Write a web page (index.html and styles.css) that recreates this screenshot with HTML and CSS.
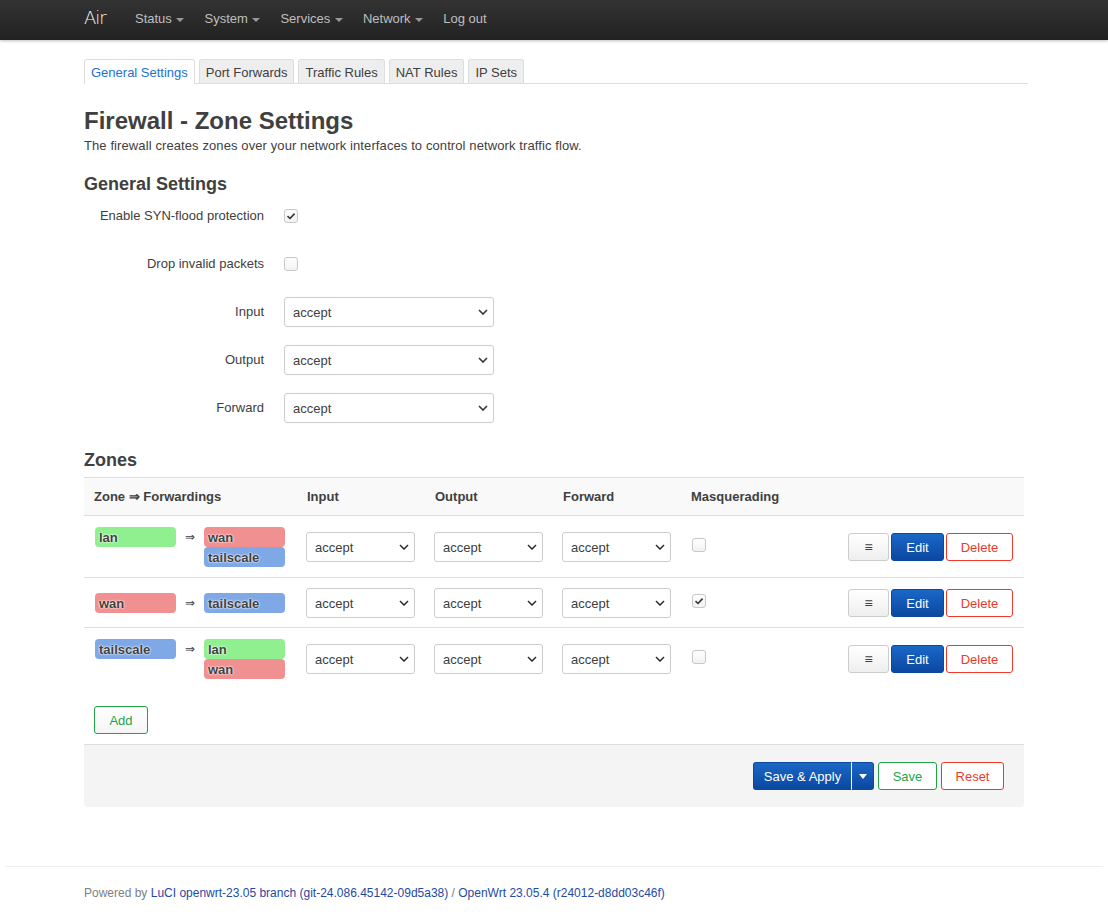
FILE: index.html
```html
<!DOCTYPE html>
<html lang="en">
<head>
    <meta charset="UTF-8">
    <title>Air - Firewall - LuCI</title>
    <link rel="stylesheet" href="styles.css">
</head>
<body>
    <header class="topbar">
        <div class="container topbar-inner">
            <a class="brand" href="#">Air</a>
            <ul class="nav">
                <li>Status <span class="caret"></span></li>
                <li>System <span class="caret"></span></li>
                <li>Services <span class="caret"></span></li>
                <li>Network <span class="caret"></span></li>
                <li>Log out</li>
            </ul>
        </div>
    </header>

    <main class="container">
        <ul class="tabs">
            <li class="active">General Settings</li>
            <li>Port Forwards</li>
            <li>Traffic Rules</li>
            <li>NAT Rules</li>
            <li>IP Sets</li>
        </ul>

        <h2 class="page-title">Firewall - Zone Settings</h2>
        <p class="page-desc">The firewall creates zones over your network interfaces to control network traffic flow.</p>

        <h3>General Settings</h3>
        <div class="form-row">
            <label>Enable SYN-flood protection</label>
            <span class="check checked">
                <svg viewBox="0 0 14 14" width="14" height="14"><path d="M3.5 7.2 L6 9.5 L10.6 4.6" fill="none" stroke="#333" stroke-width="1.6"/></svg>
            </span>
        </div>
        <div class="form-row">
            <label>Drop invalid packets</label>
            <span class="check"></span>
        </div>
        <div class="form-row">
            <label>Input</label>
            <span class="select wide"><select><option>accept</option></select><svg viewBox="0 0 10 6" width="10" height="6"><path d="M1 1 L5 5 L9 1" fill="none" stroke="#333" stroke-width="1.6"/></svg></span>
        </div>
        <div class="form-row">
            <label>Output</label>
            <span class="select wide"><select><option>accept</option></select><svg viewBox="0 0 10 6" width="10" height="6"><path d="M1 1 L5 5 L9 1" fill="none" stroke="#333" stroke-width="1.6"/></svg></span>
        </div>
        <div class="form-row">
            <label>Forward</label>
            <span class="select wide"><select><option>accept</option></select><svg viewBox="0 0 10 6" width="10" height="6"><path d="M1 1 L5 5 L9 1" fill="none" stroke="#333" stroke-width="1.6"/></svg></span>
        </div>

        <h3 class="zones-title">Zones</h3>
        <table class="zones">
            <colgroup>
                <col style="width: 213px">
                <col style="width: 128px">
                <col style="width: 128px">
                <col style="width: 128px">
                <col style="width: 120px">
                <col>
            </colgroup>
            <thead>
                <tr>
                    <th>Zone &rArr; Forwardings</th>
                    <th>Input</th>
                    <th>Output</th>
                    <th>Forward</th>
                    <th>Masquerading</th>
                    <th></th>
                </tr>
            </thead>
            <tbody>
                <tr>
                    <td>
                        <div class="fwd">
                            <span class="zone lan">lan</span>
                            <span class="arrow">&rArr;</span>
                            <span class="stack"><span class="zone wan">wan</span><span class="zone ts">tailscale</span></span>
                        </div>
                    </td>
                    <td><span class="select"><select><option>accept</option></select><svg viewBox="0 0 10 6" width="10" height="6"><path d="M1 1 L5 5 L9 1" fill="none" stroke="#333" stroke-width="1.6"/></svg></span></td>
                    <td><span class="select"><select><option>accept</option></select><svg viewBox="0 0 10 6" width="10" height="6"><path d="M1 1 L5 5 L9 1" fill="none" stroke="#333" stroke-width="1.6"/></svg></span></td>
                    <td><span class="select"><select><option>accept</option></select><svg viewBox="0 0 10 6" width="10" height="6"><path d="M1 1 L5 5 L9 1" fill="none" stroke="#333" stroke-width="1.6"/></svg></span></td>
                    <td><span class="check masq"></span></td>
                    <td class="actions">
                        <button class="btn">&equiv;</button><button class="btn btn-edit">Edit</button><button class="btn btn-del">Delete</button>
                    </td>
                </tr>
                <tr class="single">
                    <td>
                        <div class="fwd">
                            <span class="zone wan">wan</span>
                            <span class="arrow">&rArr;</span>
                            <span class="stack"><span class="zone ts">tailscale</span></span>
                        </div>
                    </td>
                    <td><span class="select"><select><option>accept</option></select><svg viewBox="0 0 10 6" width="10" height="6"><path d="M1 1 L5 5 L9 1" fill="none" stroke="#333" stroke-width="1.6"/></svg></span></td>
                    <td><span class="select"><select><option>accept</option></select><svg viewBox="0 0 10 6" width="10" height="6"><path d="M1 1 L5 5 L9 1" fill="none" stroke="#333" stroke-width="1.6"/></svg></span></td>
                    <td><span class="select"><select><option>accept</option></select><svg viewBox="0 0 10 6" width="10" height="6"><path d="M1 1 L5 5 L9 1" fill="none" stroke="#333" stroke-width="1.6"/></svg></span></td>
                    <td><span class="check masq checked"><svg viewBox="0 0 14 14" width="14" height="14"><path d="M3.5 7.2 L6 9.5 L10.6 4.6" fill="none" stroke="#333" stroke-width="1.6"/></svg></span></td>
                    <td class="actions">
                        <button class="btn">&equiv;</button><button class="btn btn-edit">Edit</button><button class="btn btn-del">Delete</button>
                    </td>
                </tr>
                <tr>
                    <td>
                        <div class="fwd">
                            <span class="zone ts">tailscale</span>
                            <span class="arrow">&rArr;</span>
                            <span class="stack"><span class="zone lan">lan</span><span class="zone wan">wan</span></span>
                        </div>
                    </td>
                    <td><span class="select"><select><option>accept</option></select><svg viewBox="0 0 10 6" width="10" height="6"><path d="M1 1 L5 5 L9 1" fill="none" stroke="#333" stroke-width="1.6"/></svg></span></td>
                    <td><span class="select"><select><option>accept</option></select><svg viewBox="0 0 10 6" width="10" height="6"><path d="M1 1 L5 5 L9 1" fill="none" stroke="#333" stroke-width="1.6"/></svg></span></td>
                    <td><span class="select"><select><option>accept</option></select><svg viewBox="0 0 10 6" width="10" height="6"><path d="M1 1 L5 5 L9 1" fill="none" stroke="#333" stroke-width="1.6"/></svg></span></td>
                    <td><span class="check masq"></span></td>
                    <td class="actions">
                        <button class="btn">&equiv;</button><button class="btn btn-edit">Edit</button><button class="btn btn-del">Delete</button>
                    </td>
                </tr>
            </tbody>
        </table>

        <button class="btn btn-add">Add</button>

        <div class="page-actions">
            <span class="apply-group">
                <button class="btn-apply">Save &amp; Apply</button><button class="btn-apply-drop"><svg viewBox="0 0 8 5" width="8" height="5"><path d="M0 0 L8 0 L4 5 Z" fill="#fff"/></svg></button>
            </span>
            <button class="btn btn-save">Save</button>
            <button class="btn btn-reset">Reset</button>
        </div>
    </main>

    <footer class="footer">
        <p>Powered by <a href="#">LuCI openwrt-23.05 branch (git-24.086.45142-09d5a38)</a> / <a href="#">OpenWrt 23.05.4 (r24012-d8dd03c46f)</a></p>
    </footer>
</body>
</html>
```

FILE: styles.css
```css
body {
    font-family: "Liberation Sans", Arial, sans-serif;
    font-size: 13px;
    line-height: 18px;
    margin: 0;
    padding: 0;
    color: #404040;
    background: #fff;
}

.container {
    width: 940px;
    margin: 0 auto;
}

/* top navigation */
.topbar {
    height: 40px;
    background: linear-gradient(#333, #222);
    box-shadow: 0 1px 3px rgba(0, 0, 0, 0.25);
}

.topbar-inner {
    display: flex;
    align-items: center;
    height: 40px;
}

.brand {
    color: #f2f2f2;
    font-family: "DejaVu Sans", sans-serif;
    font-size: 18px;
    font-weight: 200;
    letter-spacing: -1px;
    text-decoration: none;
    width: 51px;
    margin-top: -4px;
}

.nav {
    display: flex;
    list-style: none;
    margin: 0;
    padding: 0;
    color: #bfbfbf;
    font-size: 13px;
}

.nav li {
    margin-right: 20px;
    margin-top: -2px;
}

.caret {
    display: inline-block;
    width: 0;
    height: 0;
    border-left: 4px solid transparent;
    border-right: 4px solid transparent;
    border-top: 4px solid #999;
    vertical-align: middle;
    margin-left: 1px;
}

/* tabs */
.tabs {
    display: flex;
    list-style: none;
    margin: 19px -4px 0 0;
    padding: 0;
    border-bottom: 1px solid #ddd;
    height: 24px;
}

.tabs li {
    height: 23px;
    line-height: 25px;
    padding: 0 6px;
    margin-right: 4px;
    background: #eee;
    border: 1px solid #ddd;
    border-bottom: none;
    border-radius: 3px 3px 0 0;
    color: #404040;
}

.tabs li.active {
    background: #fff;
    color: #1e70d6;
    height: 24px;
}

/* headings */
.page-title {
    font-size: 24px;
    line-height: 30px;
    font-weight: bold;
    margin: 22px 0 0;
}

.page-desc {
    margin: 1px 0 0;
    font-size: 13px;
    letter-spacing: 0.1px;
}

h3 {
    font-size: 18px;
    line-height: 24px;
    margin: 17px 0 4px;
}

/* general settings form */
.form-row {
    display: flex;
    align-items: center;
    height: 30px;
    margin-bottom: 17px;
    padding-top: 1px;
}

.form-row label {
    width: 180px;
    margin-right: 20px;
    text-align: right;
    flex: none;
}

.check {
    display: inline-block;
    width: 12px;
    height: 12px;
    border: 1px solid #c7c7c7;
    border-radius: 3px;
    background: linear-gradient(#fff, #f2f2f2);
    position: relative;
}

.check svg {
    position: absolute;
    left: -1px;
    top: -1px;
}

.select {
    display: inline-block;
    position: relative;
    width: 109px;
    height: 30px;
    vertical-align: middle;
}

.select.wide {
    width: 210px;
}

.select select {
    -webkit-appearance: none;
    appearance: none;
    width: 100%;
    height: 30px;
    border: 1px solid #ccc;
    border-radius: 3px;
    background: #fff;
    padding: 0 8px;
    font-family: inherit;
    font-size: 13px;
    color: #404040;
}

.select svg {
    position: absolute;
    right: 6px;
    top: 12px;
    pointer-events: none;
}

/* zones table */
.zones-title {
    margin: 25px 0 5px;
}

.zones {
    width: 940px;
    border-collapse: collapse;
    table-layout: fixed;
}

.zones th {
    height: 37px;
    padding: 0 10px;
    text-align: left;
    font-weight: bold;
    background: #f9f9f9;
    border-top: 1px solid #ddd;
    border-bottom: 1px solid #ddd;
    white-space: nowrap;
    color: #404040;
}

.zones td {
    padding: 10px 10px;
    border-bottom: 1px solid #ddd;
    vertical-align: middle;
}

.zones tr.single td {
    padding-bottom: 9px;
}

.zones td:nth-child(2),
.zones td:nth-child(3),
.zones td:nth-child(4) {
    padding-left: 9px;
}

.zones tr:last-child td {
    border-bottom: none;
}

.zones tbody tr:first-child td,
.zones tbody tr:last-child td {
    padding-top: 11px;
    padding-bottom: 10px;
}

.fwd {
    display: flex;
    align-items: flex-start;
    margin-left: 1px;
}

.arrow {
    width: 28px;
    text-align: center;
    font-size: 12px;
    line-height: 20px;
    color: #404040;
}

.stack {
    display: flex;
    flex-direction: column;
}

.zone {
    display: block;
    width: 77px;
    height: 20px;
    padding: 0 0 0 4px;
    border-radius: 4px;
    font-weight: bold;
    line-height: 21px;
    color: #404040;
    text-shadow: 0 0 2px #fff, 0 0 2px #fff;
}

.lan { background: #90f090; }
.wan { background: #f09090; }
.ts { background: #7fa8e6; }

.masq {
    margin-left: 1px;
    margin-top: -4px;
    display: block;
}

.actions {
    text-align: right;
    white-space: nowrap;
    padding-right: 11px !important;
}

/* buttons */
.btn {
    font-family: inherit;
    font-size: 13px;
    height: 28px;
    padding: 0 12px;
    margin-left: 2px;
    border: 1px solid #ccc;
    border-radius: 3px;
    background: linear-gradient(#fff, #eee);
    color: #404040;
    cursor: pointer;
    vertical-align: middle;
}

.actions .btn:first-child {
    width: 41px;
    padding: 0;
    font-size: 14px;
}

.btn-edit {
    width: 53px;
    border-color: #0b49a0;
    background: linear-gradient(#1b67c7, #0b48a0);
    color: #fff;
}

.btn-del {
    width: 67px;
    border-color: #ee3a2b;
    background: #fff;
    color: #ee3a2b;
}

.btn-add {
    display: block;
    margin: 17px 0 0 10px;
    width: 54px;
    border-color: #1fa44a;
    color: #1fa44a;
    background: linear-gradient(#fff, #f5f5f5);
}

.page-actions {
    display: flex;
    justify-content: flex-end;
    align-items: center;
    height: 62px;
    margin-top: 10px;
    padding-right: 20px;
    background: #f4f4f4;
    border-top: 1px solid #ddd;
    border-radius: 0 0 4px 4px;
}

.apply-group {
    display: flex;
    height: 28px;
}

.apply-group button {
    font-family: inherit;
    font-size: 13px;
    border: 1px solid #0b49a0;
    background: linear-gradient(#1b67c7, #0b48a0);
    color: #fff;
    height: 28px;
    cursor: pointer;
}

.btn-apply {
    width: 98px;
    border-radius: 3px 0 0 3px;
    border-right: none !important;
    padding: 0;
}

.btn-apply-drop {
    width: 23px;
    border-radius: 0 3px 3px 0;
    border-left: 1px solid #fff !important;
    padding: 0;
    display: flex;
    align-items: center;
    justify-content: center;
}

.page-actions .btn {
    margin-left: 4px;
}

.btn-save {
    width: 59px;
    padding: 0;
    border-color: #1fa44a;
    color: #1fa44a;
    background: #fff;
}

.btn-reset {
    width: 63px;
    padding: 0;
    border-color: #ee3a2b;
    color: #ee3a2b;
    background: #fff;
}

/* footer */
.footer {
    margin: 59px 5px 0;
    border-top: 1px solid #eee;
}

.footer p {
    width: 940px;
    margin: 17px auto 0;
    font-size: 12px;
    color: #808080;
}

.footer a {
    color: #1e4aa5;
    text-decoration: none;
}
```
